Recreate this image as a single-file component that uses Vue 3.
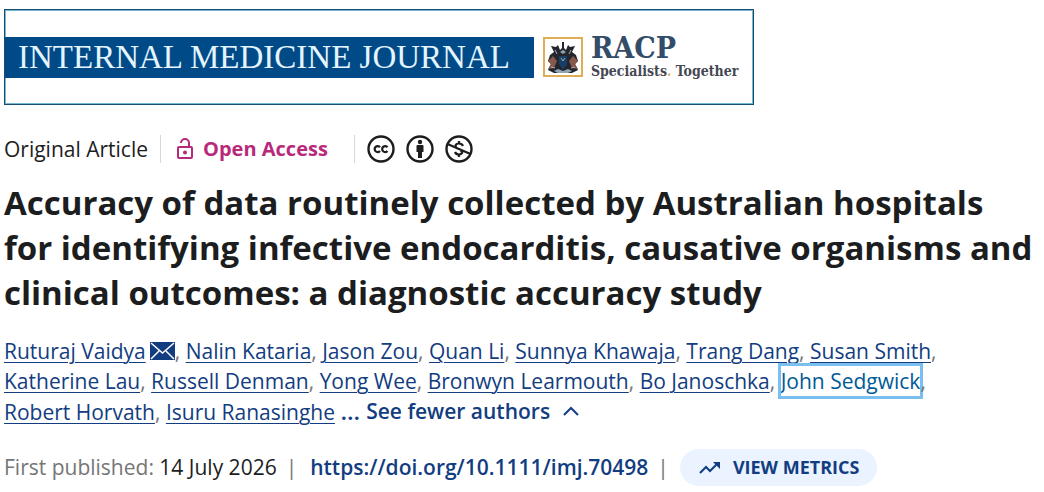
<template>
	<main class="article-header">
		<a class="banner" href="#" aria-label="Internal Medicine Journal">
			<span class="banner-name">INTERNAL MEDICINE JOURNAL</span>
			<svg class="crest" viewBox="0 0 40 40" aria-hidden="true">
				<rect x="1" y="1" width="38" height="38" fill="#fff" stroke="#dfad55" stroke-width="2" />
				<path d="M5 33l3-6-3-3 2-6 4-3-3-6 5 1 2-2 2 5 2-2V5h2v6l2 2 2-5 2 2 5-1-3 6 4 3 2 6-3 3 3 6-6 3H11z" fill="#23262c" />
				<path d="M5 24l5-5 4 5-3 7-6 1 3-5zM35 24l-5-5-4 5 3 7 6 1-3-5z" fill="#87584c" />
				<path d="M16 19h8v8l-4 6-4-6z" fill="#173f64" />
				<path d="M17 15l3-2 3 2-3 2zM11 34l4-2 5 2 5-2 4 2-4 2H15z" fill="#91a5b4" />
				<path d="M12 13l2 4M28 13l-2 4M18 21l2 3 2-3M8 30l4 1M32 30l-4 1" fill="none" stroke="#a9adb2" />
			</svg>
			<span class="racp">
				<span class="racp-name">RACP</span>
				<span class="racp-motto">Specialists<i>.</i> Together</span>
			</span>
		</a>

		<div class="access">
			<span class="article-type">Original Article</span>
			<span class="open-access">
				<svg width="18" height="22" viewBox="0 0 18 22" fill="none" stroke="#b8297c" stroke-width="2" aria-hidden="true">
					<rect x="2" y="9" width="14" height="11" rx="1" />
					<path d="M5 5a4 4 0 0 1 8 0v4" />
					<circle cx="9" cy="14.500" r="1" fill="#b8297c" />
				</svg>
				Open Access
			</span>
			<a class="licence" href="#" aria-label="Creative Commons licence">
				<svg viewBox="0 0 28 28" fill="none" stroke="#1c1d1e" aria-hidden="true">
					<circle cx="14" cy="14" r="12.500" stroke-width="2.400" />
					<path d="M13 12.200a3 3 0 1 0 0 3.800M20.500 12.200a3 3 0 1 0 0 3.800" stroke-width="2.200" />
				</svg>
				<svg viewBox="0 0 28 28" fill="#1c1d1e" aria-hidden="true">
					<circle cx="14" cy="14" r="12.500" fill="none" stroke="#1c1d1e" stroke-width="2.400" />
					<circle cx="14" cy="7" r="2.200" />
					<path d="M11.500 10h5q1 0 1 1v6H16v6h-4v-6h-1.500v-6q0-1 1-1z" />
				</svg>
				<svg viewBox="0 0 28 28" fill="none" stroke="#1c1d1e" aria-hidden="true">
					<circle cx="14" cy="14" r="12.500" stroke-width="2.400" />
					<path d="M2.500 9l23 10M14 6v3M14 19v3M18 11q-1-2.500-4-2.500c-4 0-4.500 3.500-1.500 5M15.500 15.500c3 1.500 1.500 4-1.500 4q-3 0-4-2.500" stroke-width="2.200" />
				</svg>
			</a>
		</div>

		<h1>Accuracy of data routinely collected by Australian hospitals for identifying infective endocarditis, causative organisms and clinical outcomes: a diagnostic accuracy study</h1>

		<div class="authors">
			<template v-for="(author, index) in authors" :key="author.name">
				<span class="author">
					<a href="#" :class="{ focused: author.focused }">{{ author.name }}</a>
					<svg v-if="author.mail" class="mail" viewBox="0 0 25 18" aria-hidden="true">
						<rect width="25" height="18" fill="#123d80" />
						<path d="M1 1l11.500 10L24 1M1 17l8-8M24 17l-8-8" fill="none" stroke="#fff" stroke-width="1.500" />
					</svg>
					<span v-if="index < authors.length - 1">,</span>
				</span>{{ ' ' }}
			</template>
			<button class="fewer" type="button">
				<span class="dots">...</span>
				<span>See fewer authors</span>
				<svg width="16" height="10" viewBox="0 0 16 10" aria-hidden="true">
					<path d="M1 9l7-7 7 7" fill="none" stroke="#123d80" stroke-width="2" />
				</svg>
			</button>
		</div>

		<div class="published">
			<span class="muted">First published: <time datetime="2026-07-14">14 July 2026</time></span>
			<span class="bar">|</span>
			<a class="doi" href="https://doi.org/10.1111/imj.70498">https://doi.org/10.1111/imj.70498</a>
			<span class="bar">|</span>
			<button class="metrics" type="button">
				<svg width="22" height="14" viewBox="0 0 22 14" fill="none" stroke="#123d80" stroke-width="2" aria-hidden="true">
					<path d="M1 12l6-6 4 4 8-8" />
					<path d="M14 1h7v7z" fill="#123d80" stroke="none" />
				</svg>
				VIEW METRICS
			</button>
		</div>
	</main>
</template>

<script setup>
// Authors in publication order
const authors = [
	{ name: 'Ruturaj Vaidya', mail: true },
	{ name: 'Nalin Kataria' },
	{ name: 'Jason Zou' },
	{ name: 'Quan Li' },
	{ name: 'Sunnya Khawaja' },
	{ name: 'Trang Dang' },
	{ name: 'Susan Smith' },
	{ name: 'Katherine Lau' },
	{ name: 'Russell Denman' },
	{ name: 'Yong Wee' },
	{ name: 'Bronwyn Learmouth' },
	{ name: 'Bo Janoschka' },
	{ name: 'John Sedgwick', focused: true },
	{ name: 'Robert Horvath' },
	{ name: 'Isuru Ranasinghe' },
];
</script>

<style>
body {
	background: #fff;
}
</style>

<style scoped>
.article-header {
	padding: 9px 4px 6px;
	font-family: "Open Sans", "Noto Sans", sans-serif;
	font-size: 21px;
	line-height: 30px;
	color: #1c1d1e;
}
.banner {
	display: flex;
	align-items: center;
	box-sizing: border-box;
	width: fit-content;
	padding: 24px 15px 24px 0;
	border: 1px solid #174d70;
	box-shadow: inset 0 0 0 1px #75b9d1;
	text-decoration: none;
}
.banner-name {
	padding: 0 24px 0 13px;
	margin-right: 9px;
	background: #004b87;
	color: #e4f5ff;
	font-family: "Liberation Serif", serif;
	font-size: 33px;
	line-height: 41px;
	white-space: nowrap;
}
.crest {
	flex: none;
	width: 40px;
	height: 40px;
	margin-right: 8px;
}
.racp {
	display: flex;
	flex-direction: column;
	font-family: "DejaVu Serif Condensed", "DejaVu Serif", serif;
	font-weight: bold;
	white-space: nowrap;
}
.racp-name {
	font-size: 30px;
	line-height: 28px;
	color: #334d68;
}
.racp-motto {
	font-size: 14px;
	line-height: 18px;
	color: #454852;
}
.racp-motto i {
	color: #dfad55;
}
.access {
	display: flex;
	align-items: center;
	margin-top: 30px;
	line-height: 28px;
}
.article-type {
	padding-right: 12px;
}
.open-access {
	display: flex;
	align-items: center;
	gap: 9px;
	padding: 0 26px 0 15px;
	border: solid #d5d8dc;
	border-width: 0 1px;
	color: #b8297c;
	font-size: 20px;
	font-weight: bold;
}
.licence {
	display: flex;
	gap: 11px;
	padding-left: 12px;
}
.licence svg {
	width: 28px;
	height: 28px;
}
h1 {
	margin: 17px 0 21px;
	font-size: 33px;
	line-height: 45px;
	font-weight: bold;
}
.authors,
.muted,
.bar {
	color: #767676;
}
.author {
	display: inline-flex;
	align-items: center;
	white-space: nowrap;
}
.author a {
	color: #123d80;
	text-underline-offset: 3px;
	text-decoration-thickness: 1px;
}
.author .focused {
	color: #005a96;
	text-decoration: none;
	outline: 3px solid #79bff0;
}
.mail {
	width: 25px;
	height: 18px;
	margin-left: 4px;
}
button {
	display: inline-flex;
	align-items: center;
	border: 0;
	color: #123d80;
	font: inherit;
	font-weight: 600;
}
.fewer {
	padding: 0;
	background: none;
}
.fewer svg {
	margin-left: 13px;
}
.dots {
	margin-right: 6px;
	font-size: 24px;
}
.published {
	display: flex;
	align-items: center;
	gap: 9px;
	margin-top: 22px;
	line-height: 37px;
}
.published time {
	color: #1c1d1e;
}
.doi {
	margin-left: 4px;
	color: #123d80;
	font-weight: 600;
	text-decoration: none;
}
.metrics {
	gap: 12px;
	margin-left: 2px;
	padding: 0 18px 0 19px;
	border-radius: 20px;
	background: #eaf3ff;
	font-size: 18px;
	font-weight: bold;
}
</style>
